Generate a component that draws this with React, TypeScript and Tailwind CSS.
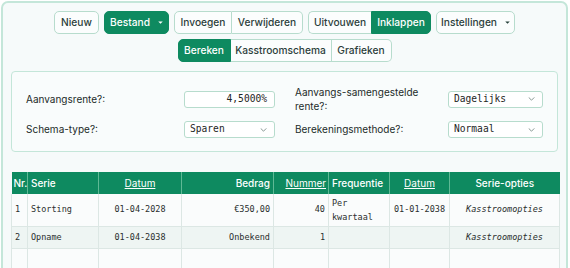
import React from "react";

const green = "bg-[#0e8a60]";
const btnBase =
  "h-[23px] flex items-center justify-center text-[10.2px] font-medium border";
const light = "bg-[#fbfdfd] border-[#b7dccd] text-[#2b403b]";
const dark = "bg-[#0e8a60] border-[#0e8a60] text-white";

const Caret = ({ white }: { white?: boolean }) => (
  <svg width="5" height="3" viewBox="0 0 6 4" className="ml-[8px]">
    <path d="M0 0.5 L6 0.5 L3 3.5 Z" fill={white ? "#ffffff" : "#27403a"} />
  </svg>
);

const Chevron = () => (
  <svg width="7" height="4" viewBox="0 0 8 5">
    <path d="M0.5 0.5 L4 4 L7.5 0.5" fill="none" stroke="#6b7d78" strokeWidth="1" />
  </svg>
);

const SelectBox = ({ value, w }: { value: string; w: string }) => (
  <div
    className={`${w} h-[17px] flex items-center justify-between pl-[5px] pr-[7px] border border-[#b7dccd] rounded-[3px] bg-white text-[9.6px] text-[#1e2523]`}
    style={{ fontFamily: '"DejaVu Sans Mono", monospace' }}
  >
    <span>{value}</span>
    <Chevron />
  </div>
);

export default function App() {
  const mono = { fontFamily: '"DejaVu Sans Mono", monospace' };
  return (
    <div
      className="w-[570px] h-[268px] overflow-hidden bg-white pt-[1px] pl-[1px]"
      style={{ fontFamily: "Inter, sans-serif" }}
    >
      <div className="w-[567px] h-[300px] border-2 border-[#c4e6d9] rounded-[7px] bg-[#f6fafa] pt-[8px] px-[8px]">
        {/* toolbar row 1 */}
        <div className="flex justify-center gap-[5px]">
          <button className={`${btnBase} ${light} w-[45px] rounded-[5px]`}>Nieuw</button>
          <button className={`${btnBase} ${dark} w-[65px] rounded-[5px]`}>
            Bestand
            <Caret white />
          </button>
          <div className="flex">
            <button className={`${btnBase} ${light} w-[58px] rounded-l-[5px]`}>Invoegen</button>
            <button className={`${btnBase} ${light} w-[71px] rounded-r-[5px] border-l-0`}>
              Verwijderen
            </button>
          </div>
          <div className="flex">
            <button className={`${btnBase} ${light} w-[63px] rounded-l-[5px] border-r-0`}>
              Uitvouwen
            </button>
            <button className={`${btnBase} ${dark} w-[60px] rounded-r-[5px]`}>Inklappen</button>
          </div>
          <button className={`${btnBase} ${light} w-[79px] rounded-[5px]`}>
            Instellingen
            <Caret />
          </button>
        </div>
        {/* toolbar row 2 */}
        <div className="flex justify-center mt-[5px]">
          <button className={`${btnBase} ${dark} w-[53px] rounded-l-[5px]`}>Bereken</button>
          <button className={`${btnBase} ${light} w-[101px] border-l-0`}>Kasstroomschema</button>
          <button className={`${btnBase} ${light} w-[60px] rounded-r-[5px] border-l-0`}>
            Grafieken
          </button>
        </div>
        {/* settings */}
        <div className="mt-[9px] border border-[#c4e6d9] rounded-[4px] bg-[#f9fcfc] pt-[13px] pb-[13px] pl-[14px] pr-[15px]">
          <div className="grid grid-cols-[158px_111px_153px_95px] gap-y-[8px] items-center text-[10px] text-[#222b29]">
            <div>Aanvangsrente?:</div>
            <div>
              <div
                className="w-[91px] h-[17px] flex items-center justify-end pr-[7px] border border-[#b7dccd] rounded-[3px] bg-white text-[9.6px] text-[#1e2523]"
                style={mono}
              >
                4,5000%
              </div>
            </div>
            <div className="leading-[14px]">
              Aanvangs-samengestelde
              <br />
              rente?:
            </div>
            <SelectBox value="Dagelijks" w="w-[95px]" />
            <div>Schema-type?:</div>
            <div>
              <SelectBox value="Sparen" w="w-[91px]" />
            </div>
            <div>Berekeningsmethode?:</div>
            <SelectBox value="Normaal" w="w-[95px]" />
          </div>
        </div>
        {/* table */}
        <table className="mt-[20px] w-[548px] table-fixed border-collapse text-[8.5px] text-[#2a2f2e]">
          <colgroup>
            <col className="w-[16px]" />
            <col className="w-[71px]" />
            <col className="w-[83px]" />
            <col className="w-[92px]" />
            <col className="w-[55px]" />
            <col className="w-[61px]" />
            <col className="w-[60px]" />
            <col className="w-[110px]" />
          </colgroup>
          <thead>
            <tr className={`${green} text-white text-[10px] font-medium h-[22px]`}>
              <th className="text-left pl-[2px] border-r border-[#5fb995] font-medium">Nr.</th>
              <th className="text-left pl-[3px] border-r border-[#5fb995] font-medium">Serie</th>
              <th className="text-center border-r border-[#5fb995] underline font-normal">Datum</th>
              <th className="text-right pr-[3px] border-r border-[#5fb995] font-medium">Bedrag</th>
              <th className="text-right pr-[2px] border-r border-[#5fb995] underline font-normal">
                Nummer
              </th>
              <th className="text-left pl-[3px] border-r border-[#5fb995] font-medium">Frequentie</th>
              <th className="text-center border-r border-[#5fb995] underline font-normal">Datum</th>
              <th className="text-center font-medium">Serie-opties</th>
            </tr>
          </thead>
          <tbody style={mono}>
            <tr className="bg-[#fafcfc] h-[32px] border-b border-[#dce7e4]">
              <td className="pl-[3px] border-x border-[#dce7e4]">1</td>
              <td className="pl-[3px] border-r border-[#dce7e4]">Storting</td>
              <td className="text-center border-r border-[#dce7e4]">01-04-2028</td>
              <td className="text-right pr-[3px] border-r border-[#dce7e4]">€350,00</td>
              <td className="text-right pr-[3px] border-r border-[#dce7e4]">40</td>
              <td className="pl-[3px] leading-[14px] border-r border-[#dce7e4]">
                Per
                <br />
                kwartaal
              </td>
              <td className="text-center border-r border-[#dce7e4]">01-01-2038</td>
              <td className="text-center italic border-r border-[#dce7e4]">Kasstroomopties</td>
            </tr>
            <tr className="bg-[#eef5f3] h-[22px] border-b border-[#dce7e4]">
              <td className="pl-[3px] border-x border-[#dce7e4]">2</td>
              <td className="pl-[3px] border-r border-[#dce7e4]">Opname</td>
              <td className="text-center border-r border-[#dce7e4]">01-04-2038</td>
              <td className="text-right pr-[3px] border-r border-[#dce7e4]">Onbekend</td>
              <td className="text-right pr-[3px] border-r border-[#dce7e4]">1</td>
              <td className="border-r border-[#dce7e4]"></td>
              <td className="border-r border-[#dce7e4]"></td>
              <td className="text-center italic border-r border-[#dce7e4]">Kasstroomopties</td>
            </tr>
            <tr className="bg-[#fafcfc] h-[30px]">
              <td className="border-x border-[#dce7e4]"></td>
              <td className="border-r border-[#dce7e4]"></td>
              <td className="border-r border-[#dce7e4]"></td>
              <td className="border-r border-[#dce7e4]"></td>
              <td className="border-r border-[#dce7e4]"></td>
              <td className="border-r border-[#dce7e4]"></td>
              <td className="border-r border-[#dce7e4]"></td>
              <td className="border-r border-[#dce7e4]"></td>
            </tr>
          </tbody>
        </table>
      </div>
    </div>
  );
}
